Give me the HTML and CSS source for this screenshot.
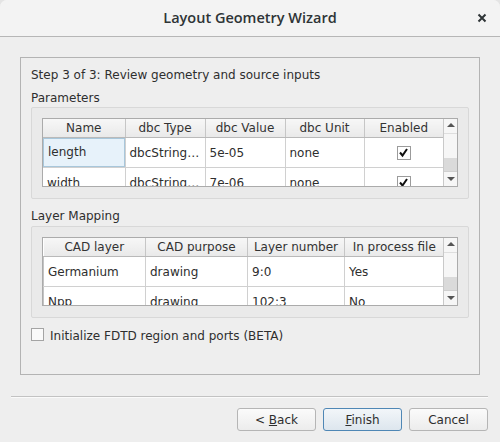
FILE: index.html
```html
<!DOCTYPE html>
<html lang="en">
<head>
  <meta charset="UTF-8">
  <title>Layout Geometry Wizard</title>
  <link rel="stylesheet" href="styles.css">
</head>
<body>

<div class="window">
  <div class="titlebar">
    <span class="title">Layout Geometry Wizard</span>
    <svg class="close" width="10" height="10" viewBox="0 0 10 10">
      <path d="M1.5 1.5 L8.5 8.5 M8.5 1.5 L1.5 8.5" stroke="#2e3436" stroke-width="2" fill="none"/>
    </svg>
  </div>

  <div class="page">
    <div class="frame">
      <div class="step">Step 3 of 3: Review geometry and source inputs</div>

      <div class="label">Parameters</div>
      <div class="group">
        <div class="view">
          <div class="grid">
            <table>
              <colgroup>
                <col style="width: 82px">
                <col style="width: 80px">
                <col style="width: 80px">
                <col style="width: 79px">
                <col style="width: 79px">
              </colgroup>
              <tr>
                <th>Name</th>
                <th>dbc Type</th>
                <th>dbc Value</th>
                <th>dbc Unit</th>
                <th>Enabled</th>
              </tr>
              <tr>
                <td><span class="current">length</span></td>
                <td>dbcString…</td>
                <td>5e-05</td>
                <td>none</td>
                <td class="center"><span class="tick"><svg width="11" height="11" viewBox="0 0 11 11"><path d="M2 5.5 L4.5 8.5 L9 2" stroke="#111" stroke-width="2" fill="none"/></svg></span></td>
              </tr>
              <tr>
                <td>width</td>
                <td>dbcString…</td>
                <td>7e-06</td>
                <td>none</td>
                <td class="center"><span class="tick"><svg width="11" height="11" viewBox="0 0 11 11"><path d="M2 5.5 L4.5 8.5 L9 2" stroke="#111" stroke-width="2" fill="none"/></svg></span></td>
              </tr>
            </table>
          </div>
          <div class="scrollbar">
            <div class="arrow up"></div>
            <div class="track"></div>
            <div class="thumb"></div>
            <div class="arrow down"></div>
          </div>
        </div>
      </div>

      <div class="label label-gap">Layer Mapping</div>
      <div class="group group-gap">
        <div class="view">
          <div class="grid">
            <table class="layers">
              <colgroup>
                <col style="width: 102px">
                <col style="width: 102px">
                <col style="width: 97px">
                <col style="width: 99px">
              </colgroup>
              <tr>
                <th>CAD layer</th>
                <th>CAD purpose</th>
                <th>Layer number</th>
                <th>In process file</th>
              </tr>
              <tr>
                <td>Germanium</td>
                <td>drawing</td>
                <td>9:0</td>
                <td>Yes</td>
              </tr>
              <tr>
                <td>Npp</td>
                <td>drawing</td>
                <td>102:3</td>
                <td>No</td>
              </tr>
            </table>
          </div>
          <div class="scrollbar">
            <div class="arrow up"></div>
            <div class="track"></div>
            <div class="thumb"></div>
            <div class="arrow down"></div>
          </div>
        </div>
      </div>

      <label class="option">
        <span class="box"></span>
        <span>Initialize FDTD region and ports (BETA)</span>
      </label>
    </div>

    <div class="footer">
      <div class="separator"></div>
      <div class="buttons">
        <button>&lt; <u>B</u>ack</button>
        <button class="default"><u>F</u>inish</button>
        <button>Cancel</button>
      </div>
    </div>
  </div>
</div>

</body>
</html>
```

FILE: styles.css
```css
html, body {
  margin: 0;
  background: #e4e4e4;
}
body {
  font-family: "DejaVu Sans", sans-serif;
  font-size: 12px;
  color: #2e2e2e;
}
.window {
  width: 500px;
  height: 442px;
  background: #eeeeee;
  border-radius: 7px 7px 0 0;
  overflow: hidden;
}
.titlebar {
  height: 36px;
  border-bottom: 1px solid #b6b6b6;
  background: #f3f3f3;
  display: flex;
  align-items: center;
  justify-content: center;
  position: relative;
}
.title {
  font-family: "Open Sans", sans-serif;
  font-weight: 600;
  font-size: 14.5px;
  color: #2e3436;
  margin-top: -1px;
}
.close {
  position: absolute;
  right: 13px;
  top: 13px;
}
.page {
  padding-top: 20px;
}
.frame {
  margin: 0 20px;
  height: 318px;
  box-sizing: border-box;
  border: 1px solid #b3b3b3;
  padding: 9px 10px 0;
}
.step, .label {
  line-height: 16px;
}
.label {
  margin-top: 7px;
}
.label-gap {
  margin-top: 9px;
}
.group {
  margin-top: 1px;
  border: 1px solid #d8d8d8;
  border-radius: 2px;
  background: #eaeaea;
  padding: 10px 10px 11px;
}
.group-gap {
  margin-top: 2px;
}
.view {
  height: 69px;
  display: flex;
  border: 1px solid #ababab;
  box-sizing: border-box;
  background: #fff;
}
.grid {
  width: 400px;
  flex: none;
  overflow: hidden;
  border-right: 1px solid #c9c9c9;
}
table {
  border-collapse: collapse;
  table-layout: fixed;
  width: 400px;
}
th {
  height: 18px;
  padding: 0;
  font-weight: normal;
  text-align: center;
  background: linear-gradient(#f7f7f7, #e9e9e9);
  border-right: 1px solid #c6c6c6;
  border-bottom: 1px solid #b9b9b9;
  color: #333;
  white-space: nowrap;
  overflow: hidden;
}
th:last-child, td:last-child {
  border-right: none;
}
td {
  height: 29px;
  padding: 0 0 0 4px;
  border-right: 1px solid #d0d0d0;
  border-bottom: 1px solid #d0d0d0;
  white-space: nowrap;
  overflow: hidden;
}
.layers td:first-child {
  border-left: 1px solid #c4c4c4;
}
.center {
  text-align: center;
  padding: 0;
}
.current {
  display: block;
  margin: 0 0 0 -4px;
  height: 27px;
  line-height: 27px;
  padding-left: 4px;
  background: #e7f2fa;
  border: 1px solid #a8c7db;
}
.tick {
  display: inline-flex;
  align-items: center;
  justify-content: center;
  width: 12px;
  height: 12px;
  border: 1px solid #9b9b9b;
  background: #fff;
  vertical-align: middle;
}
.scrollbar {
  width: 14px;
  display: flex;
  flex-direction: column;
  background: #f6f6f6;
}
.arrow {
  height: 14px;
  position: relative;
  background: #f6f6f6;
}
.arrow::after {
  content: "";
  position: absolute;
  left: 3px;
  border-left: 4px solid transparent;
  border-right: 4px solid transparent;
}
.up::after {
  top: 4px;
  border-bottom: 4px solid #555;
}
.down::after {
  top: 5px;
  border-top: 4px solid #555;
}
.track {
  flex: 1;
  background: #f6f6f6;
  border-top: 1px solid #dedede;
}
.thumb {
  height: 13px;
  background: #dadada;
  border-bottom: 1px solid #cfcfcf;
}
.option {
  display: flex;
  align-items: flex-start;
  margin-top: 10px;
  line-height: 16px;
}
.box {
  width: 11px;
  height: 11px;
  border: 1px solid #a4a4a4;
  background: #fafafa;
  margin-right: 6px;
}
.footer {
  padding: 0 12px 0 11px;
}
.separator {
  margin-top: 21px;
  border-top: 1px solid #c2c2c2;
  border-bottom: 1px solid #fafafa;
}
.buttons {
  margin-top: 10px;
  display: flex;
  justify-content: flex-end;
  gap: 7px;
}
button {
  width: 79px;
  height: 23px;
  font-family: "DejaVu Sans", sans-serif;
  font-size: 12px;
  color: #2e2e2e;
  border: 1px solid #b5b5b5;
  border-radius: 3px;
  background: linear-gradient(#fbfbfb, #ececec);
  padding: 0;
}
button.default {
  border-color: #4f87b5;
  background: linear-gradient(#f2f6f9, #dde6ee);
}
```
